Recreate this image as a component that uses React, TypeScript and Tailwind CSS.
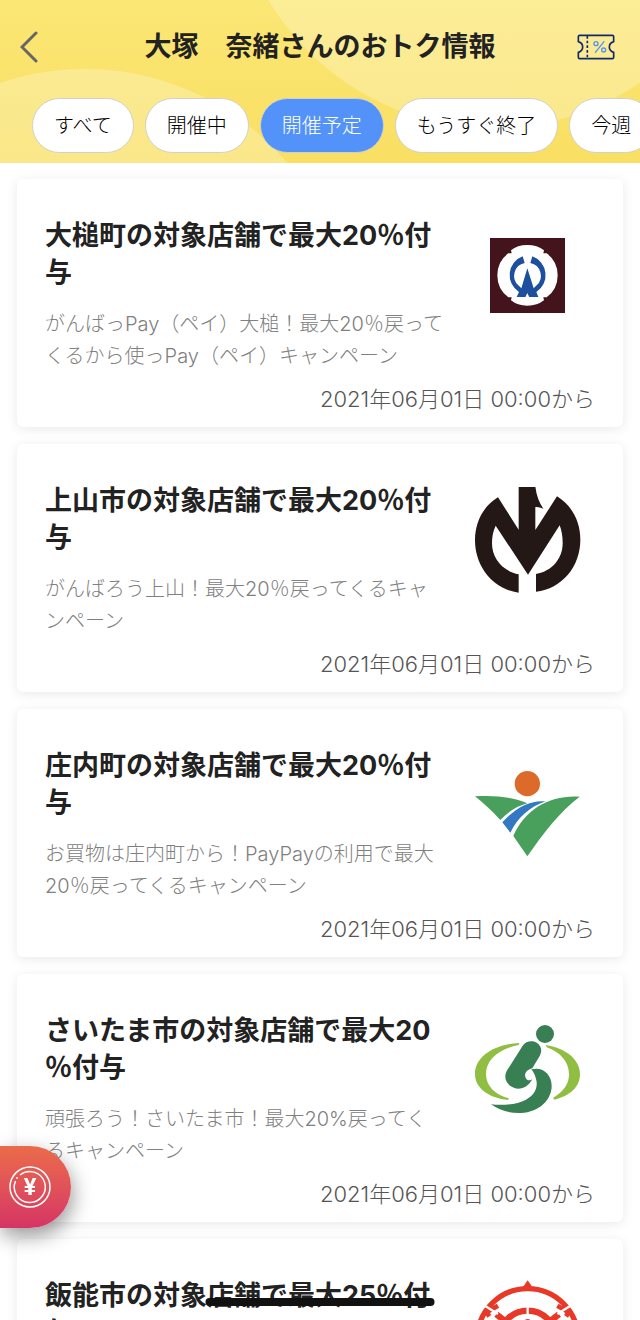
import { useState } from "react";
import type { ReactNode } from "react";

type Campaign = {
  id: string;
  title: string;
  description: string;
  startsAt: string;
  logo: ReactNode;
};

const filters = ["すべて", "開催中", "開催予定", "もうすぐ終了", "今週"];

function OtsuchiLogo() {
  return (
    <svg viewBox="-39 -42 318 318" className="size-full" aria-hidden="true">
      <rect x="6" y="6" width="225" height="225" fill="#43141b" />
      <path
        d="M69 43 Q88 27 118 27 Q148 27 168 43 L166 52 H176 Q209 76 209 118 Q209 160 176 184 H166 L168 193 Q148 209 118 209 Q88 209 69 193 L71 184 H61 Q28 160 28 118 Q28 76 61 52 H71 Z"
        fill="#fff"
      />
      <path
        d="M104 61 A60 60 0 0 0 93 168 L86 183 H151 L145 168 A60 60 0 0 0 133 61 L127 81 A39 39 0 0 1 146 148 L137 157 L118 97 L100 157 L91 148 A39 39 0 0 1 110 81 Z"
        fill="#1d4f9f"
      />
      <path d="M112 184 L118 171 L124 184 Z" fill="#fff" />
    </svg>
  );
}

function KaminoyamaLogo() {
  return (
    <svg viewBox="30 36 318 318" className="size-full" aria-hidden="true">
      <path
        d="M161 34 H211 Q215 72 235 101 Q223 95 211 96 V165 L276 64 C322 92 346 141 346 194 C346 275 291 341 213 350 V297 C262 289 293 250 293 205 C293 185 290 167 284 151 L189 299 L92 152 C84 169 81 186 81 205 C81 250 112 288 161 298 V353 C85 343 30 276 30 196 C30 143 53 95 99 67 L161 164 Z"
        fill="#231815"
      />
    </svg>
  );
}

function ShonaiLogo() {
  return (
    <svg viewBox="30 -24 318 318" className="size-full" aria-hidden="true">
      <circle cx="187" cy="71" r="38" fill="#dc6b2b" />
      <path d="M30 109 C88 105 145 111 187 130 C157 138 130 155 106 180 C82 154 57 130 30 109 Z" fill="#49a05c" />
      <path d="M112 187 C146 149 191 119 242 124 C191 142 158 174 136 218 Z" fill="#3279c3" />
      <path d="M145 228 C181 145 258 104 344 110 C283 156 236 218 187 289 Z" fill="#49a05c" />
    </svg>
  );
}

function SaitamaLogo() {
  return (
    <svg viewBox="30 6 318 318" className="size-full" aria-hidden="true">
      <g fill="#8fbe42">
        <path d="M163 84 C88 87 30 124 30 177 C30 219 70 249 130 255 L131 250 C91 240 63 213 63 177 C63 132 105 101 161 90 Z" />
        <path d="M242 90 C301 99 345 133 345 177 C345 216 315 243 267 254 L265 248 C296 230 312 207 312 178 C312 141 286 111 245 97 Z" />
      </g>
      <g fill="#387f54">
        <circle cx="240" cy="57" r="27" />
        <path d="M173 92 C183 78 201 75 215 83 C230 92 232 108 224 123 L202 160 C185 164 178 175 181 186 C184 196 193 199 202 193 C192 211 178 221 159 221 C131 219 112 193 125 168 Z" />
        <path d="M199 163 C235 154 260 180 260 213 C260 252 225 292 167 294 C133 295 103 286 78 268 C112 272 155 269 183 254 C208 240 219 220 214 196 C211 182 206 172 199 163 Z" />
      </g>
    </svg>
  );
}

function HannoLogo() {
  return (
    <svg viewBox="15 21 318 318" className="size-full overflow-visible" aria-hidden="true">
      <path d="M159 36 L173 16 L187 36 Z" fill="#e83828" />
      <g fill="none" stroke="#e83828">
        <circle cx="173" cy="192" r="151" strokeWidth="16" />
        <circle cx="173" cy="192" r="85" strokeWidth="19" />
        <path d="M58 124 L50 112 L84 92 M288 124 L296 112 L262 92" strokeWidth="14" />
        <path d="M79 118 L104 137 M267 118 L242 137" strokeWidth="19" />
      </g>
      <circle cx="173" cy="145" r="13" fill="#e83828" />
      <path
        d="M173 94 V118 M42 91 L84 117 M304 91 L262 117"
        stroke="#fff"
        strokeWidth="7"
      />
    </svg>
  );
}

const campaigns: Campaign[] = [
  {
    id: "otsuchi",
    title: "大槌町の対象店舗で最大20％付\n与",
    description: "がんばっPay（ペイ）大槌！最大20％戻って\nくるから使っPay（ペイ）キャンペーン",
    startsAt: "2021年06月01日 00:00から",
    logo: <OtsuchiLogo />,
  },
  {
    id: "kaminoyama",
    title: "上山市の対象店舗で最大20％付\n与",
    description: "がんばろう上山！最大20％戻ってくるキャ\nンペーン",
    startsAt: "2021年06月01日 00:00から",
    logo: <KaminoyamaLogo />,
  },
  {
    id: "shonai",
    title: "庄内町の対象店舗で最大20％付\n与",
    description: "お買物は庄内町から！PayPayの利用で最大\n20％戻ってくるキャンペーン",
    startsAt: "2021年06月01日 00:00から",
    logo: <ShonaiLogo />,
  },
  {
    id: "saitama",
    title: "さいたま市の対象店舗で最大20\n％付与",
    description: "頑張ろう！さいたま市！最大20%戻ってく\nるキャンペーン",
    startsAt: "2021年06月01日 00:00から",
    logo: <SaitamaLogo />,
  },
  {
    id: "hanno",
    title: "飯能市の対象店舗で最大25％付\n与",
    description: "飯能市のお店を応援しよう！最大25％\n戻ってくるキャンペーン",
    startsAt: "2021年06月01日 00:00から",
    logo: <HannoLogo />,
  },
];

function TicketIcon() {
  return (
    <svg viewBox="770 101 114 78" className="h-[26px] w-[38px]" fill="none" aria-hidden="true">
      <path
        d="M778 105 H876 Q880 105 880 109 V124 Q867 128 867 140 Q867 152 880 156 V171 Q880 175 876 175 H778 Q774 175 774 171 V156 Q787 152 787 140 Q787 128 774 124 V109 Q774 105 778 105 Z"
        stroke="#122a6b"
        strokeWidth="5"
        strokeLinejoin="round"
      />
      <path d="M801 107 V175" stroke="#122a6b" strokeWidth="5" strokeDasharray="8 6" />
      <g stroke="#5392f9" strokeWidth="4" strokeLinecap="round">
        <path d="M851 124 L825 156" />
        <circle cx="827" cy="130" r="6" />
        <circle cx="850" cy="149" r="6" />
      </g>
    </svg>
  );
}

function CampaignCard({ campaign }: { campaign: Campaign }) {
  return (
    <article className="rounded-md bg-white pt-[38px] pr-7 pb-3 pl-7 shadow-[0_2px_12px_rgba(0,0,0,0.09)]">
      <div className="flex gap-5 pr-[14px]">
        <div className="min-w-0 flex-1 whitespace-pre">
          <h2 className="text-[27px] leading-[37px] font-bold text-[#222]">
            {campaign.title}
          </h2>
          <p className="mt-[17px] text-xl leading-8 font-light text-[#808080]">
            {campaign.description}
          </p>
        </div>
        <div className="mt-[5px] size-[106px] shrink-0">{campaign.logo}</div>
      </div>
      <p className="mt-[11px] text-right text-[22px] leading-8 font-light text-[#555]">
        {campaign.startsAt}
      </p>
    </article>
  );
}

export default function App() {
  const [activeFilter, setActiveFilter] = useState("開催予定");

  return (
    <div
      lang="ja"
      className="flex h-screen flex-col overflow-hidden bg-white font-['Inter','Noto_Sans_CJK_JP',sans-serif]"
    >
      <header className="relative shrink-0 overflow-hidden bg-linear-to-b from-[#fbe775] to-[#f9df62] pb-[10px]">
        <div className="absolute top-[69px] -left-[180px] size-[530px] rounded-full bg-white/25" />
        <div className="absolute -top-[394px] -right-[114px] size-[522px] rounded-full bg-white/25" />

        <div className="relative flex h-[98px] items-center justify-between pr-[25px] pb-1 pl-5">
          <button type="button" aria-label="戻る" className="w-[43px]">
            <svg viewBox="0 0 18 32" className="h-8 w-[18px]" fill="none" aria-hidden="true">
              <path d="M16 2 L2 16 L16 30" stroke="#666" strokeWidth="3" strokeLinecap="round" />
            </svg>
          </button>
          <h1 className="text-[27px] leading-10 font-bold whitespace-nowrap text-[#222]">
            大塚　奈緒さんのおトク情報
          </h1>
          <button type="button" aria-label="クーポン">
            <TicketIcon />
          </button>
        </div>

        <nav className="relative flex gap-[11px] overflow-hidden pl-8">
          {filters.map((filter) => (
            <button
              key={filter}
              type="button"
              aria-pressed={filter === activeFilter}
              onClick={() => setActiveFilter(filter)}
              className={[
                "h-[55px] shrink-0 rounded-full border border-[#d3d0c8] px-[21px] text-xl",
                filter === activeFilter
                  ? "bg-[#5392f9] font-light text-white"
                  : "bg-white font-light text-black",
              ].join(" ")}
            >
              {filter}
            </button>
          ))}
        </nav>
      </header>

      <main className="flex min-h-0 flex-1 flex-col gap-[17px] overflow-y-auto px-[17px] py-4 [scrollbar-width:none]">
        {campaigns.map((campaign) => (
          <CampaignCard key={campaign.id} campaign={campaign} />
        ))}
      </main>

      <button
        type="button"
        aria-label="支払い"
        className="fixed bottom-[92px] left-0 flex h-[82px] w-[71px] items-center rounded-r-full bg-linear-to-b from-[#eb6b49] to-[#d63364] pl-2 shadow-[2px_8px_20px_rgba(0,0,0,0.4)]"
      >
        <svg viewBox="0 0 44 44" className="size-11" fill="none" stroke="#fff" aria-hidden="true">
          <circle cx="22" cy="22" r="20" strokeWidth="1.5" />
          <path d="M7.500 16 A15.500 15.500 0 1 0 12 10" strokeWidth="1.500" />
          <circle cx="9" cy="13" r="1" fill="#fff" stroke="none" />
          <text
            x="22"
            y="30"
            textAnchor="middle"
            fill="#fff"
            stroke="none"
            className="text-[23px] font-bold"
          >
            ¥
          </text>
        </svg>
      </button>

      <div className="fixed bottom-[14px] left-1/2 h-2 w-[229px] -translate-x-1/2 rounded-full bg-[#111]" />
    </div>
  );
}
